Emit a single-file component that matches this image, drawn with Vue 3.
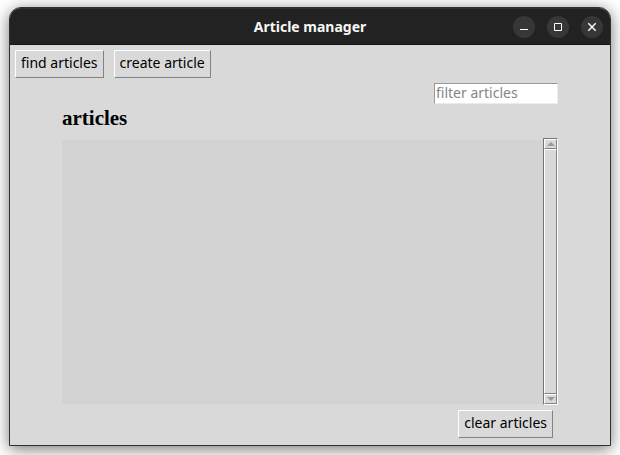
<script setup>
import { ref } from 'vue'

const filter = ref('')
const articles = ref([])
</script>

<template>
  <div class="desktop">
    <main class="window">
      <header class="titlebar">
        <h1 class="title">Article manager</h1>
        <div class="controls">
          <button class="control" type="button" aria-label="Minimize">
            <svg width="22" height="22" viewBox="0 0 22 22"><path d="M7 13.5h8" /></svg>
          </button>
          <button class="control" type="button" aria-label="Maximize">
            <svg width="22" height="22" viewBox="0 0 22 22"><path d="M7.5 7.5h7v7h-7z" /></svg>
          </button>
          <button class="control" type="button" aria-label="Close">
            <svg width="22" height="22" viewBox="0 0 22 22"><path class="cross" d="M7.3 7.3l7.4 7.4M14.7 7.3l-7.4 7.4" /></svg>
          </button>
        </div>
      </header>

      <div class="content">
        <nav class="toolbar">
          <button class="button" type="button">find articles</button>
          <button class="button" type="button">create article</button>
        </nav>

        <section class="panel">
          <input v-model="filter" class="filter" type="text" placeholder="filter articles" aria-label="filter articles" />
          <h2 class="heading">articles</h2>
          <div class="listing">
            <ul class="list">
              <li v-for="article in articles" :key="article">{{ article }}</li>
            </ul>
            <div class="scrollbar">
              <button class="arrow" type="button" aria-label="Scroll up">
                <svg width="8" height="4" viewBox="0 0 8 4"><path d="M4 0l4 4H0z" /></svg>
              </button>
              <div class="thumb"></div>
              <button class="arrow" type="button" aria-label="Scroll down">
                <svg width="8" height="4" viewBox="0 0 8 4"><path d="M4 4l4-4H0z" /></svg>
              </button>
            </div>
          </div>
          <button class="button clear" type="button" @click="articles = []">clear articles</button>
        </section>
      </div>
    </main>
  </div>
</template>

<style>
body {
  background: #fff;
}
</style>

<style scoped>
.desktop {
  box-sizing: border-box;
  display: flex;
  min-height: 100vh;
  padding: 7px 9px 9px;
  overflow: hidden;
  font-family: "Noto Sans", "Open Sans", sans-serif;
  font-size: 14px;
  color: #000;
}

.window {
  box-sizing: border-box;
  flex: 1;
  display: flex;
  flex-direction: column;
  border: 1px solid #303030;
  border-radius: 12px 12px 0 0;
  background: #d9d9d9;
  box-shadow: 0 3px 16px rgba(0, 0, 0, 0.55);
}

.titlebar {
  box-sizing: border-box;
  display: grid;
  grid-template-columns: 1fr auto 1fr;
  align-items: center;
  height: 37px;
  padding: 0 7px;
  border-top: 1px solid #333;
  border-bottom: 1px solid #161616;
  border-radius: 11px 11px 0 0;
  background: #222;
}

.title {
  grid-column: 2;
  margin: 0;
  font-size: 14px;
  font-weight: 700;
  line-height: 20px;
  color: #f7f7f7;
}

.controls {
  display: flex;
  justify-content: flex-end;
  gap: 12px;
}

.control {
  width: 22px;
  height: 22px;
  padding: 0;
  border: 0;
  border-radius: 50%;
  background: #373737;
}

.control svg {
  display: block;
  fill: none;
  stroke: #fff;
  stroke-width: 1;
}

.control .cross {
  stroke-width: 1.4;
}

.content {
  flex: 1;
  display: flex;
  flex-direction: column;
  gap: 5px;
  padding: 5px 5px 7px;
}

.toolbar {
  display: flex;
  gap: 10px;
}

.button {
  box-sizing: border-box;
  height: 28px;
  padding: 0 5px 2px;
  border: 1px solid;
  border-color: #fff #828282 #828282 #fff;
  background: #d9d9d9;
  font: inherit;
  line-height: 22px;
  color: #000;
}

.panel {
  flex: 1;
  display: flex;
  flex-direction: column;
  margin: 0 47px;
}

.filter {
  box-sizing: border-box;
  align-self: flex-end;
  width: 124px;
  height: 21px;
  padding: 0 1px 2px;
  border: 1px solid;
  border-color: #999 #ececec #ececec #999;
  border-radius: 0;
  background: #fff;
  font: inherit;
  line-height: 17px;
  color: #000;
}

.filter::placeholder {
  color: #858585;
  opacity: 1;
}

.heading {
  margin: 0;
  padding: 1px 0 7px;
  font-family: "Liberation Serif", serif;
  font-size: 21px;
  font-weight: 700;
  line-height: 26px;
}

.listing {
  flex: 1;
  display: flex;
}

.list {
  flex: 1;
  margin: 2px 0 1px;
  padding: 0;
  list-style: none;
  background: #d3d3d3;
}

.scrollbar {
  box-sizing: border-box;
  display: flex;
  flex-direction: column;
  width: 15px;
  border: 1px solid;
  border-color: #757575 #fff #fff #757575;
  background: #c3c3c3;
}

.arrow,
.thumb {
  box-sizing: border-box;
  border: 1px solid;
  border-color: #fff #828282 #828282 #fff;
  background: #d9d9d9;
}

.arrow {
  display: flex;
  align-items: center;
  justify-content: center;
  height: 10px;
  padding: 0;
}

.arrow svg {
  display: block;
  fill: #999;
}

.thumb {
  flex: 1;
}

.clear {
  align-self: flex-end;
  margin: 5px 5px 0 0;
}
</style>
